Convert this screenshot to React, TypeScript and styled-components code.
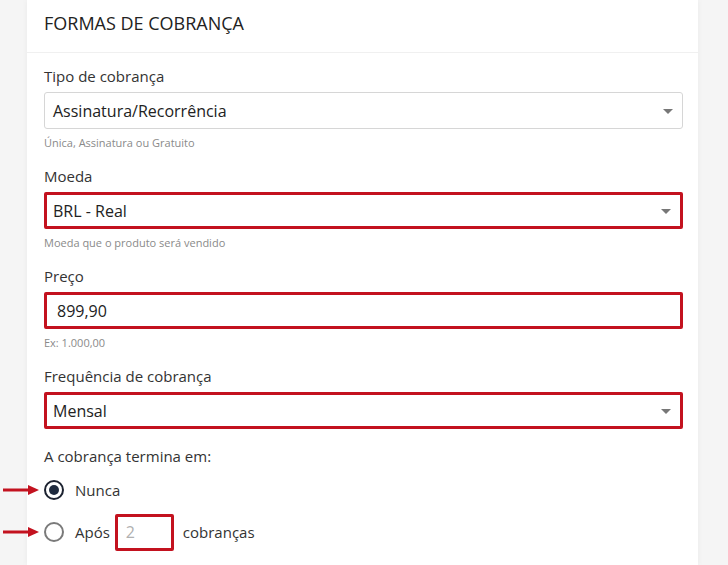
import React from "react";
import styled, { createGlobalStyle } from "styled-components";

const GlobalStyle = createGlobalStyle`
  html, body {
    margin: 0;
    padding: 0;
    background: #f5f5f5;
    font-family: "Open Sans", "Liberation Sans", sans-serif;
    color: #333;
  }
  * { box-sizing: border-box; }
`;

const Page = styled.div`
  width: 728px;
  height: 565px;
  overflow: hidden;
  padding-left: 27px;
`;

const Card = styled.div`
  width: 671px;
  min-height: 565px;
  background: #fff;
  box-shadow: 0 0 6px rgba(0, 0, 0, 0.05);
`;

const CardHeader = styled.div`
  height: 53px;
  padding: 11px 17px 0;
  border-bottom: 1px solid #f0f0f0;
  font-size: 18px;
  line-height: 25px;
  color: #222;
  text-transform: uppercase;
`;

const CardBody = styled.div`
  padding: 12px 15px 0 17px;
`;

const Field = styled.div<{ $last?: boolean }>`
  margin-bottom: ${(p) => (p.$last ? "16px" : "14px")};
`;

const Label = styled.div`
  font-size: 15px;
  line-height: 22px;
  color: #333;
  margin-bottom: 5px;
`;

const Control = styled.div<{ $marked?: boolean; $padLeft?: number }>`
  position: relative;
  height: 37px;
  display: flex;
  align-items: center;
  padding-left: ${(p) => p.$padLeft ?? (p.$marked ? 6 : 8)}px;
  border: ${(p) => (p.$marked ? "3px solid #c3121f" : "1px solid #d6d6d6")};
  border-radius: ${(p) => (p.$marked ? "2px" : "3px")};
  font-size: 16px;
  color: #222;
  background: #fff;
`;

const Caret = styled.span`
  position: absolute;
  right: 9px;
  top: 50%;
  margin-top: -2px;
  width: 0;
  height: 0;
  border-left: 5px solid transparent;
  border-right: 5px solid transparent;
  border-top: 5px solid #777;
`;

const Help = styled.div`
  margin-top: 6px;
  font-size: 11px;
  line-height: 16px;
  color: #8a8a8a;
`;

const RadioGroup = styled.div`
  margin-top: 5px;
  display: flex;
  flex-direction: column;
  gap: 6px;
`;

const RadioRow = styled.div`
  position: relative;
  height: 36px;
  display: flex;
  align-items: center;
  font-size: 15px;
  color: #333;
`;

const Radio = styled.span<{ $checked?: boolean }>`
  width: 20px;
  height: 20px;
  border-radius: 50%;
  border: 2px solid ${(p) => (p.$checked ? "#1c2230" : "#7a7a7a")};
  display: flex;
  align-items: center;
  justify-content: center;
  margin-right: 11px;
  &::after {
    content: "";
    display: ${(p) => (p.$checked ? "block" : "none")};
    width: 10px;
    height: 10px;
    border-radius: 50%;
    background: #1e2a3e;
  }
`;

const CountBox = styled.div`
  width: 59px;
  height: 37px;
  margin: 0 9px 0 5px;
  border: 3px solid #c3121f;
  border-radius: 2px;
  display: flex;
  align-items: center;
  padding-left: 8px;
  font-size: 16px;
  color: #b0b0b0;
`;

const Arrow = styled.svg`
  position: absolute;
  left: -42px;
  top: 50%;
  margin-top: -6px;
`;

function RedArrow() {
  return (
    <Arrow width="38" height="12" viewBox="0 0 38 12">
      <line x1="1" y1="6" x2="28" y2="6" stroke="#c3121f" strokeWidth="3" />
      <polygon points="26,1 37,6 26,11" fill="#c3121f" />
    </Arrow>
  );
}

type SelectProps = { value: string; marked?: boolean };

function Select({ value, marked }: SelectProps) {
  return (
    <Control $marked={marked}>
      {value}
      <Caret />
    </Control>
  );
}

export default function App() {
  return (
    <>
      <GlobalStyle />
      <Page>
        <Card>
          <CardHeader>Formas de cobrança</CardHeader>
          <CardBody>
            <Field>
              <Label>Tipo de cobrança</Label>
              <Select value="Assinatura/Recorrência" />
              <Help>Única, Assinatura ou Gratuito</Help>
            </Field>
            <Field>
              <Label>Moeda</Label>
              <Select value="BRL - Real" marked />
              <Help>Moeda que o produto será vendido</Help>
            </Field>
            <Field>
              <Label>Preço</Label>
              <Control $marked $padLeft={10}>
                899,90
              </Control>
              <Help>Ex: 1.000,00</Help>
            </Field>
            <Field $last>
              <Label>Frequência de cobrança</Label>
              <Select value="Mensal" marked />
            </Field>
            <Label>A cobrança termina em:</Label>
            <RadioGroup>
              <RadioRow>
                <RedArrow />
                <Radio $checked />
                Nunca
              </RadioRow>
              <RadioRow>
                <RedArrow />
                <Radio />
                Após
                <CountBox>2</CountBox>
                cobranças
              </RadioRow>
            </RadioGroup>
          </CardBody>
        </Card>
      </Page>
    </>
  );
}
